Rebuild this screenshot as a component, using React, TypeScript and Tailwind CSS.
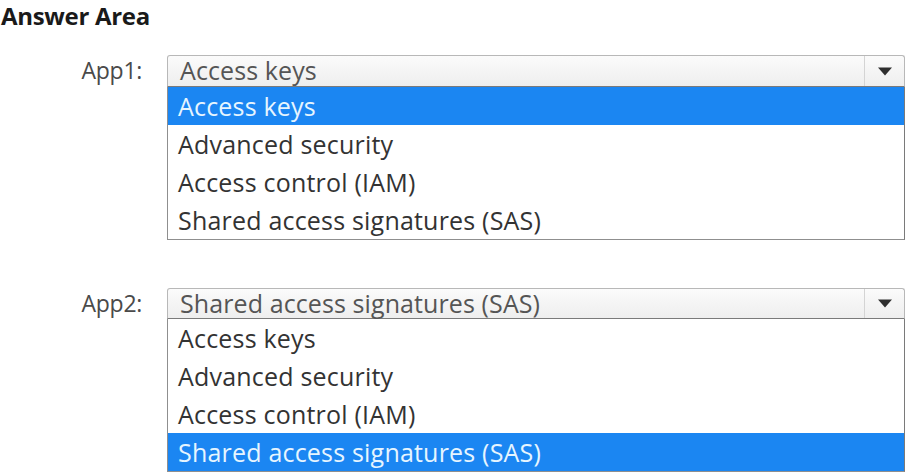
import React from "react";

const options = [
  "Access keys",
  "Advanced security",
  "Access control (IAM)",
  "Shared access signatures (SAS)",
];

function Dropdown({
  label,
  selected,
  headerH,
  mt,
}: {
  label: string;
  selected: number;
  headerH: string;
  mt: string;
}) {
  return (
    <div className={`flex ${mt}`}>
      <div className="w-[167px] shrink-0 pr-[25px] text-right text-[23px] leading-[30px] tracking-[-0.3px] text-[#4a4a4a]">
        {label}
      </div>
      <div className="w-[738px] shrink-0">
        <div
          className={`flex ${headerH} rounded-t-[3px] border border-[#b8b8b8] border-b-[#7a7a7a] bg-gradient-to-b from-[#fbfbfb] to-[#eeeeee]`}
        >
          <div className="flex-1 whitespace-nowrap pl-[12px] text-[25px] leading-[29px] tracking-[0.1px] text-[#555555]">
            {options[selected]}
          </div>
          <div className="flex w-[40px] items-center justify-center border-l border-[#d4d4d4]">
            <svg width="16" height="9" viewBox="0 0 16 9">
              <path d="M1 0.5 L15 0.5 L8 8.5 Z" fill="#2e2e2e" />
            </svg>
          </div>
        </div>
        <div className="border border-t-0 border-[#8f8f8f] border-r-[#7a7a7a] bg-white">
          {options.map((o, i) => (
            <div
              key={o}
              className={
                i === selected
                  ? "h-[38px] pl-[10px] text-[25px] leading-[38px] tracking-[0.2px] bg-[#1b86f2] text-[#e6f5ff]"
                  : "h-[38px] pl-[10px] text-[25px] leading-[38px] tracking-[0.2px] text-[#333333]"
              }
            >
              {o}
            </div>
          ))}
        </div>
      </div>
    </div>
  );
}

export default function App() {
  return (
    <div className="relative h-[474px] w-[909px] overflow-hidden bg-white font-['Open_Sans',sans-serif]">
      <h1 className="pl-[1px] text-[24px] font-bold leading-[32px] tracking-[-0.3px] text-[#1a1a1a]">
        Answer Area
      </h1>
      <Dropdown label="App1:" selected={0} headerH="h-[32px]" mt="mt-[23px]" />
      <Dropdown label="App2:" selected={3} headerH="h-[31px]" mt="mt-[48px]" />
    </div>
  );
}
